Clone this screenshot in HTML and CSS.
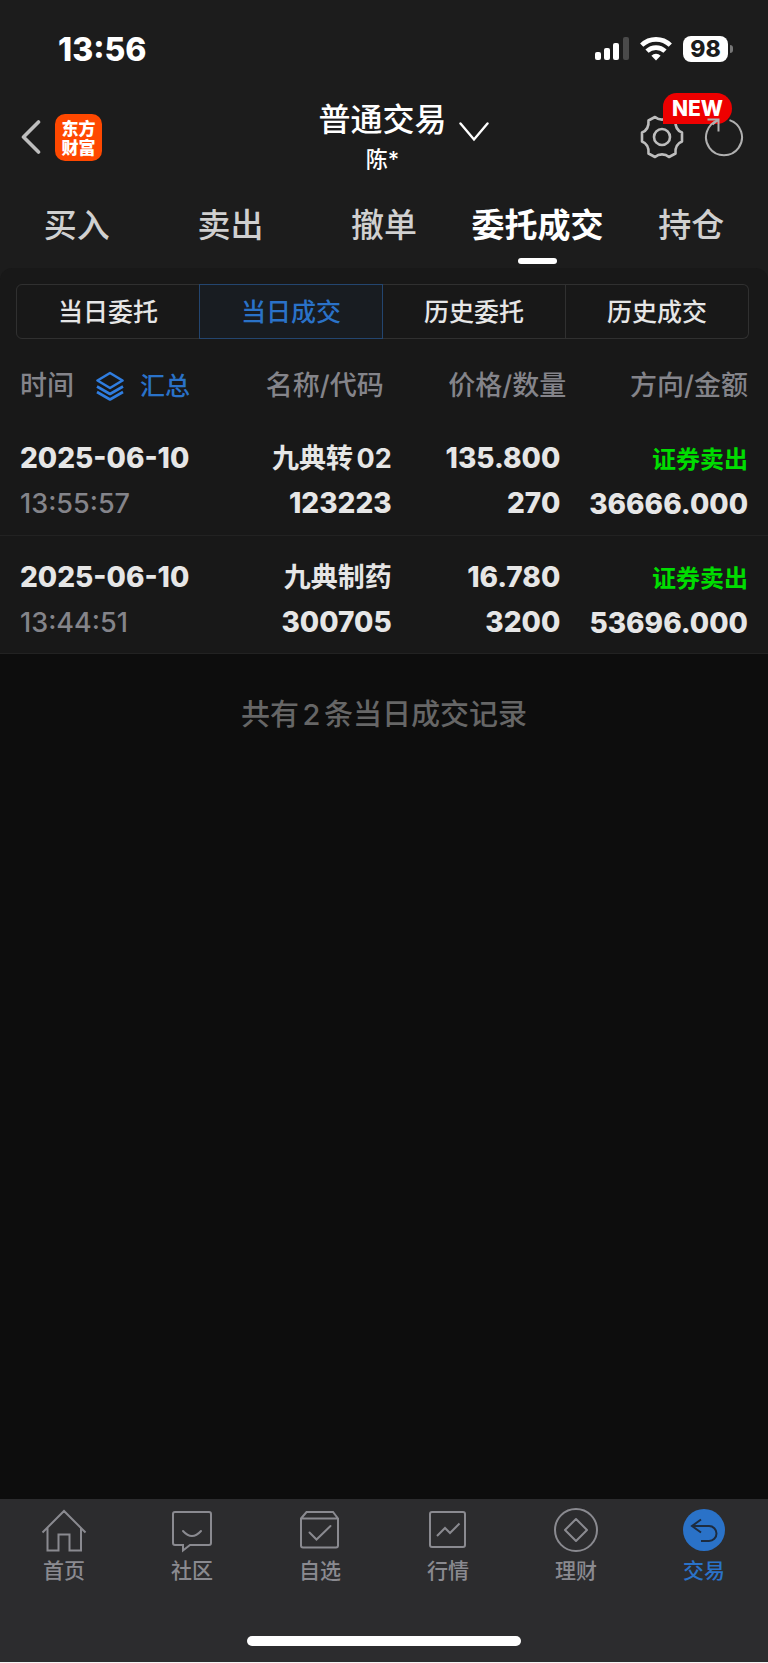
FILE: index.html
```html
<!DOCTYPE html>
<html lang="zh-CN">
<head>
    <meta charset="UTF-8">
    <meta name="viewport" content="width=device-width, initial-scale=1">
    <title>普通交易</title>
    <link rel="stylesheet" href="styles.css">
</head>
<body>
    <header class="header">
        <div class="status-bar">
            <span class="clock">13:56</span>
            <div class="status-icons">
                <svg width="34" height="24" viewBox="0 0 34 24" fill="#fff">
                    <rect x="0" y="15" width="6" height="8" rx="2"/>
                    <rect x="9" y="11" width="6" height="12" rx="2"/>
                    <rect x="18" y="6" width="6" height="17" rx="2"/>
                    <rect x="28" y="0" width="6" height="23" rx="2" fill="#4a4a4a"/>
                </svg>
                <svg width="32" height="24" viewBox="0 0 32 24" fill="none" stroke="#fff" stroke-width="4.6">
                    <path d="M1.7 8.2a20.5 20.5 0 0 1 28.6 0"/>
                    <path d="M7 14.2a13 13 0 0 1 18 0"/>
                    <path d="M16 23.5l-4.6-4.8a6.5 6.5 0 0 1 9.2 0z" fill="#fff" stroke="none"/>
                </svg>
                <span class="battery">98</span>
            </div>
        </div>

        <div class="nav">
            <div class="nav-left">
                <button class="icon-button" aria-label="返回">
                    <svg width="20" height="36" viewBox="0 0 20 36" fill="none" stroke="#bdbdbd" stroke-width="3.6" stroke-linecap="round">
                        <path d="M17.500 3L2.500 18l15 15" stroke-linejoin="round"/>
                    </svg>
                </button>
                <a class="logo" href="#"><span>东方</span><span>财富</span></a>
            </div>
            <div class="nav-title">
                <button class="account">
                    普通交易
                    <svg width="30" height="20" viewBox="0 0 30 20" fill="none" stroke="#fff" stroke-width="2.400" stroke-linecap="round">
                        <path d="M1.500 1.500L15 17.500l13.500-16"/>
                    </svg>
                </button>
                <span class="user">陈*</span>
            </div>
            <div class="nav-right">
                <button class="icon-button settings" aria-label="设置">
                    <svg width="44" height="44" viewBox="0 0 44 44" fill="none" stroke="#bdbdbd" stroke-width="2.600" stroke-linejoin="round">
                        <path d="M15 2C19 5.500 25 5.500 29 2L35.500 5.500C35 11.500 37 15.500 42 17.500V26.500C37 28.500 35 32.500 35.500 38.500L29 42C25 38.500 19 38.500 15 42L8.500 38.500C9 32.500 7 28.500 2 26.500V17.500C7 15.500 9 11.500 8.500 5.500Z"/>
                        <circle cx="22" cy="22" r="8"/>
                    </svg>
                    <span class="badge">NEW</span>
                </button>
                <button class="icon-button refresh" aria-label="刷新">
                    <svg width="40" height="44" viewBox="0 0 40 44" fill="none" stroke="#b0b0b0" stroke-width="2">
                        <path d="M14.500 5.100A18 18 0 1 0 25.500 5.100"/>
                        <path d="M3.500 4.500h11v12M14.500 4.500l-6 5"/>
                    </svg>
                </button>
            </div>
        </div>

        <nav class="tabs">
            <a href="#">买入</a>
            <a href="#">卖出</a>
            <a href="#">撤单</a>
            <a href="#" class="active">委托成交</a>
            <a href="#">持仓</a>
        </nav>
    </header>

    <main class="main">
        <section class="panel">
            <div class="segments">
                <button>当日委托</button>
                <button class="active">当日成交</button>
                <button>历史委托</button>
                <button>历史成交</button>
            </div>

            <table class="trades">
                <thead>
                    <tr>
                        <th class="col-time">
                            <div class="time-head">
                                时间
                                <button class="summary">
                                    <svg width="28" height="30" viewBox="0 0 28 30" fill="none" stroke="#2f7de0" stroke-width="2.600" stroke-linejoin="round">
                                        <path d="M14 2L26.500 9.500 14 17 1.500 9.500z"/>
                                        <path d="M1 15.500l13 7.500 13-7.500M1 21l13 7.500L27 21"/>
                                    </svg>
                                    汇总
                                </button>
                            </div>
                        </th>
                        <th class="col-name">名称/代码</th>
                        <th class="col-price">价格/数量</th>
                        <th class="col-amount">方向/金额</th>
                    </tr>
                </thead>
                <tbody>
                    <tr>
                        <td class="col-time">2025-06-10<br><span class="time">13:55:57</span></td>
                        <td class="col-name"><span class="name">九典转02</span><br>123223</td>
                        <td class="col-price">135.800<br>270</td>
                        <td class="col-amount"><span class="sell">证券卖出</span><br>36666.000</td>
                    </tr>
                    <tr>
                        <td class="col-time">2025-06-10<br><span class="time">13:44:51</span></td>
                        <td class="col-name"><span class="name">九典制药</span><br>300705</td>
                        <td class="col-price">16.780<br>3200</td>
                        <td class="col-amount"><span class="sell">证券卖出</span><br>53696.000</td>
                    </tr>
                </tbody>
            </table>
        </section>
        <p class="total">共有2条当日成交记录</p>
    </main>

    <footer class="footer">
        <nav class="tab-bar">
            <a href="#">
                <svg width="46" height="44" viewBox="0 0 46 44">
                    <path d="M1.500 23.500L23 2l21.500 21.500M6.500 19v22.500h11V25.500h11v16h11.500V19"/>
                </svg>
                首页
            </a>
            <a href="#">
                <svg width="46" height="44" viewBox="0 0 46 44">
                    <path d="M6 3h34q2 0 2 2v29q0 2-2 2H21l-7 5.500V36H6q-2 0-2-2V5q0-2 2-2z"/>
                    <path d="M14 22q9 10 18 0" stroke-linecap="round"/>
                </svg>
                社区
            </a>
            <a href="#">
                <svg width="46" height="44" viewBox="0 0 46 44">
                    <path d="M4 9.500L9.500 3h26.500l5 6.500v27q0 2-2 2H6q-2 0-2-2zM4 9.500h37"/>
                    <path d="M12.500 23.500l7 7L33.500 17" stroke-linecap="round"/>
                </svg>
                自选
            </a>
            <a href="#">
                <svg width="46" height="44" viewBox="0 0 46 44">
                    <rect x="5" y="3" width="35" height="35" rx="2"/>
                    <path d="M12 27l8-8 5 5 9.500-9.500"/>
                </svg>
                行情
            </a>
            <a href="#">
                <svg width="46" height="44" viewBox="0 0 46 44">
                    <circle cx="23" cy="21" r="21"/>
                    <path d="M23 10l11 11-11 11-11-11z" stroke-linejoin="round"/>
                </svg>
                理财
            </a>
            <a href="#" class="active">
                <svg width="46" height="44" viewBox="0 0 46 44">
                    <circle cx="23" cy="21" r="21" fill="#2a72c8" stroke="none"/>
                    <path d="M20 10.500L11 17l9 6.500M11 17h17a7.500 7.500 0 0 1 0 15h-8" stroke="#1d2c40"/>
                </svg>
                交易
            </a>
        </nav>
        <div class="home-indicator"></div>
    </footer>
</body>
</html>
```
FILE: styles.css
```css
* {
    box-sizing: border-box;
}
body {
    display: flex;
    flex-direction: column;
    min-height: 100vh;
    margin: 0;
    border-bottom: 1px solid #f4f4f4;
    background-color: #0d0d0d;
    color: #e6e6e6;
    font-family: Inter, "Noto Sans CJK SC", sans-serif;
    font-weight: 500;
    text-autospace: normal;
}
a {
    color: inherit;
    text-decoration: none;
}
button {
    padding: 0;
    border: 0;
    background: none;
    color: inherit;
    font: inherit;
}
svg {
    display: block;
    flex: none;
}

/* header */
.header {
    background-color: #1c1c1c;
}
.status-bar {
    display: flex;
    justify-content: space-between;
    align-items: center;
    height: 98px;
    padding: 0 37px 0 58px;
    color: #fff;
}
.clock {
    font-size: 32px;
    font-weight: 800;
}
.status-icons {
    display: flex;
    align-items: center;
    gap: 11px;
}
.battery {
    position: relative;
    width: 45px;
    margin-right: 3px;
    border-radius: 8px;
    background-color: #fff;
    color: #1c1c1c;
    font-size: 23px;
    font-weight: 800;
    line-height: 26px;
    text-align: center;
}
.battery::after {
    content: "";
    position: absolute;
    top: 9px;
    right: -5px;
    width: 3px;
    height: 8px;
    border-radius: 0 3px 3px 0;
    background-color: #777;
}
.nav {
    display: grid;
    grid-template-columns: 1fr auto 1fr;
    align-items: center;
    height: 78px;
    padding: 0 24px 0 21px;
}
.nav-left,
.nav-right {
    display: flex;
    align-items: center;
}
.nav-left {
    gap: 14px;
}
.nav-right {
    justify-content: flex-end;
    gap: 20px;
}
.logo {
    display: flex;
    flex-direction: column;
    justify-content: center;
    width: 47px;
    height: 47px;
    border-radius: 10px;
    background-color: #ff4800;
    color: #fff;
    font-family: "Noto Sans CJK SC", sans-serif;
    font-size: 17px;
    font-weight: 900;
    line-height: 19px;
    text-align: center;
}
.nav-title {
    display: flex;
    flex-direction: column;
    align-items: center;
    color: #fff;
}
.account {
    display: flex;
    align-items: flex-end;
    gap: 12px;
    padding-left: 42px;
    font-size: 32px;
    line-height: 44px;
}
.user {
    font-size: 22px;
    line-height: 34px;
}
.settings {
    position: relative;
}
.badge {
    position: absolute;
    top: -22px;
    left: 23px;
    width: 69px;
    border-radius: 14px 16px 16px 0;
    background-color: #ee0000;
    color: #fff;
    font-size: 21px;
    font-weight: 800;
    line-height: 31px;
    text-align: center;
}
.refresh {
    position: relative;
}
.tabs {
    display: flex;
    height: 92px;
    color: #d0d0d0;
    font-size: 33px;
    line-height: 48px;
}
.tabs a {
    display: flex;
    flex: 1 0 0;
    flex-direction: column;
    align-items: center;
    padding-top: 25px;
    white-space: nowrap;
}
.tabs .active {
    color: #fff;
    font-weight: 700;
}
.tabs .active::after {
    content: "";
    width: 39px;
    height: 6px;
    margin-top: 9px;
    border-radius: 3px;
    background-color: #fff;
}

/* trades */
.main {
    flex: 1;
    background: linear-gradient(#1c1c1c 20px, #0d0d0d 20px);
}
.panel {
    border-radius: 12px 12px 0 0;
    padding-top: 16px;
    background-color: #181818;
}
.segments {
    display: flex;
    margin: 0 19px 0 16px;
    font-size: 25px;
}
.segments button {
    flex: 1;
    height: 55px;
    padding-bottom: 3px;
    border: 1px solid #303030;
}
.segments button + button {
    border-left: 0;
}
.segments button:first-child {
    border-radius: 6px 0 0 6px;
}
.segments button:last-child {
    border-radius: 0 6px 6px 0;
}
.segments .active {
    border-color: #23456f;
    background-color: #181c21;
    box-shadow: -1px 0 #23456f;
    color: #2a72c8;
}
.trades {
    width: 100%;
    border-collapse: collapse;
    table-layout: fixed;
    white-space: nowrap;
}
.trades th {
    height: 78px;
    padding: 16px 0 0;
    color: #84848a;
    font-size: 27px;
    font-weight: 500;
    line-height: 36px;
    text-align: right;
}
.trades td {
    height: 118px;
    padding: 19px 0 0;
    border-bottom: 1px solid #222;
    font-size: 28px;
    font-weight: 800;
    line-height: 45px;
    text-align: right;
    vertical-align: top;
}
.trades .col-time {
    width: 28%;
    padding-left: 20px;
    text-align: left;
}
.trades .col-name {
    width: 23%;
}
.trades .col-price {
    width: 23%;
}
.trades .col-amount {
    width: 26%;
    padding-right: 20px;
}
.trades th.col-name {
    padding-right: 8px;
}
.trades th.col-price {
    padding-right: 2px;
}
.trades td.col-price {
    padding-right: 8px;
}
.time-head,
.summary {
    display: flex;
    align-items: center;
}
.time-head {
    gap: 22px;
}
.summary {
    gap: 16px;
    color: #2a72c8;
    font-size: 25px;
}
.time {
    color: #84848a;
    font-size: 27px;
    font-weight: 500;
}
.name {
    font-size: 27px;
    font-weight: 700;
}
.sell {
    color: #00dd00;
    font-size: 24px;
    font-weight: 700;
}
.total {
    margin: 40px 0 0;
    color: #666;
    font-size: 29px;
    line-height: 42px;
    text-align: center;
}

/* bottom bar */
.footer {
    padding-bottom: 16px;
    background-color: #2c2c2e;
}
.tab-bar {
    display: flex;
    height: 137px;
    padding-top: 10px;
    color: #8a8a90;
    font-size: 21px;
    line-height: 32px;
}
.tab-bar a {
    display: flex;
    flex: 1;
    flex-direction: column;
    align-items: center;
    gap: 2px;
}
.tab-bar svg {
    fill: none;
    stroke: #8a8a90;
    stroke-width: 2;
    overflow: visible;
}
.tab-bar .active {
    color: #2a72c8;
}
.home-indicator {
    width: 274px;
    height: 10px;
    margin: 0 auto;
    border-radius: 5px;
    background-color: #fff;
}
```
